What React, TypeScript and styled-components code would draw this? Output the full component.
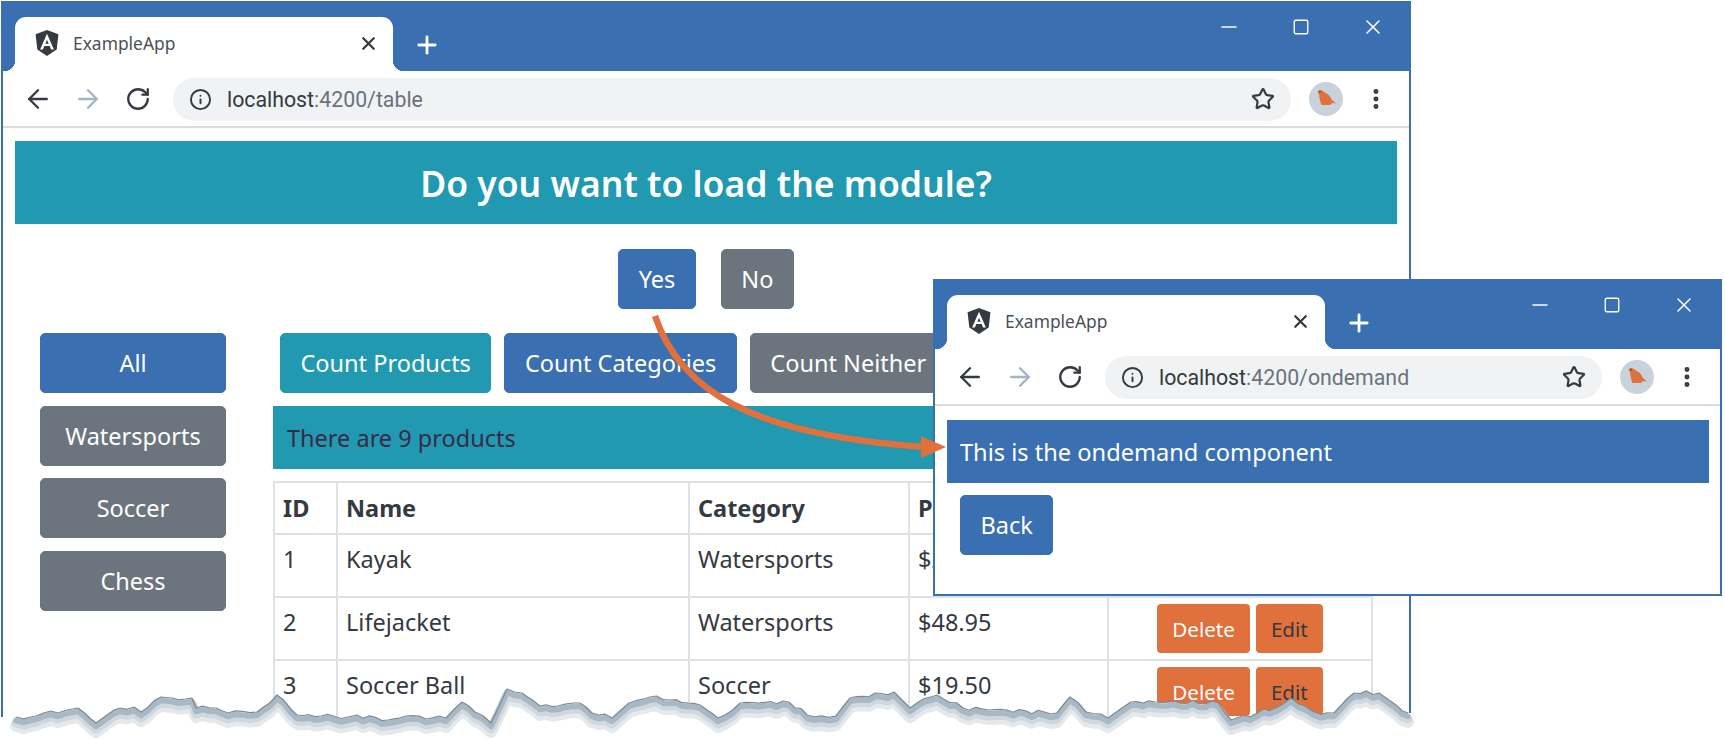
import React from "react";
import styled, { createGlobalStyle } from "styled-components";
import { ArrowLeft, ArrowRight, Info, Minus, MoreVertical, Plus, RotateCw, Square, Star, X } from "lucide-react";

const BLUE = "#3a6fb1";
const TEAL = "#2199b1";
const GREY = "#6c757d";
const ORANGE = "#e0703c";
const DARK = "#343a40";

const GlobalStyle = createGlobalStyle`
  html, body {
    margin: 0;
    padding: 0;
    background: #fff;
  }
  body {
    font-family: "Noto Sans", "Liberation Sans", sans-serif;
    color: ${DARK};
  }
`;

const AngularIcon = () => (
  <svg width="26" height="28" viewBox="0 0 24 26">
    <path d="M12 1 22.6 4.8 21 19 12 25 3 19 1.4 4.8Z" fill="#343a40" />
    <path fillRule="evenodd" fill="#fff" d="M12 4.5 5.6 19h2.6l1.3-3.2h5l1.3 3.2h2.6ZM10.5 13.6 12 10l1.5 3.6Z" />
  </svg>
);

const BirdAvatar = () => (
  <svg width="34" height="34" viewBox="0 0 34 34">
    <circle cx="17" cy="17" r="17" fill="#c8d2db" />
    <path d="M8.5 9.5C9.5 8 11.5 7.5 13 8.5 15.5 10.5 19 11.5 21 14.5L23 18 27 21.5 23 21 21 23H12.5C11 20 10.5 16 10 12.5Z" fill="#e0703c" />
    <circle cx="11" cy="9.8" r="0.8" fill="#343a40" />
  </svg>
);

// top edge of the torn paper, traced from the screenshot
const TEAR: [number, number][] = [
  [16, 717], [31, 717], [36, 716], [51, 711], [58, 713], [67, 710], [78, 708], [96, 723], [107, 715],
  [120, 708], [134, 707], [141, 712], [161, 697], [172, 698], [192, 698], [196, 708], [216, 708], [228, 713],
  [257, 712], [277, 695], [297, 715], [321, 716], [348, 717], [357, 715], [388, 720], [406, 716], [446, 718],
  [462, 702], [475, 712], [491, 723], [507, 689], [522, 693], [540, 706], [558, 706], [580, 703], [592, 713],
  [612, 718], [629, 703], [650, 697], [670, 700], [700, 705], [718, 718], [740, 703], [789, 702], [807, 715],
  [836, 716], [850, 698], [894, 692], [910, 708], [917, 703], [937, 695], [963, 708], [1057, 713], [1070, 697],
  [1086, 712], [1108, 718], [1131, 702], [1155, 702], [1218, 703], [1231, 720], [1276, 708], [1291, 698],
  [1314, 712], [1334, 713], [1354, 693], [1379, 693], [1396, 705], [1408, 713],
];

// break the long segments up a bit so the edge looks ripped, not polygonal
const roughen = (pts: [number, number][]) => {
  const out: string[] = [];
  pts.forEach(([x, y], i) => {
    out.push(`${x},${y}`);
    const next = pts[i + 1];
    if (!next) return;
    const steps = Math.floor((next[0] - x) / 6);
    for (let s = 1; s < steps; s++) {
      const t = s / steps;
      const px = x + (next[0] - x) * t;
      const py = y + (next[1] - y) * t + Math.sin(px * 1.7) * 1.3 + Math.sin(px * 0.61) * 0.9;
      out.push(`${px.toFixed(1)},${py.toFixed(1)}`);
    }
  });
  return out.join(" ");
};
const tearLine = roughen(TEAR);

const TornEdge = () => (
  <TearSvg viewBox="0 0 1725 740">
    <polygon points={`0,717 ${tearLine} 1412,713 1412,740 0,740`} fill="#fff" />
    <TearStroke points={tearLine} stroke="#e6e9ec" strokeWidth="12" transform="translate(0 9)" />
    <TearStroke points={tearLine} stroke="#cfd8de" strokeWidth="9" transform="translate(0 6)" />
    <TearStroke points={tearLine} stroke="#a8b8c5" strokeWidth="5.5" transform="translate(0 3.5)" />
    <TearStroke points={tearLine} stroke="#7c8a96" strokeWidth="1.2" />
  </TearSvg>
);

const CurveArrow = () => (
  <ArrowSvg viewBox="0 0 1725 740">
    <path d="M655 316C680 390 750 435 925 447" fill="none" stroke={ORANGE} strokeWidth="6.5" />
    <path d="M921 436 946 447 921 458Z" fill={ORANGE} />
  </ArrowSvg>
);

const BrowserChrome = ({ host, path }: { host: string; path: string }) => (
  <>
    <TitleBar>
      <Tab>
        <AngularIcon />
        <TabTitle>ExampleApp</TabTitle>
        <TabClose>
          <X size={21} strokeWidth={2.6} />
        </TabClose>
      </Tab>
      <NewTab>
        <Plus size={28} strokeWidth={2.4} />
      </NewTab>
      <WindowControls>
        <WindowControl><Minus size={24} strokeWidth={1.5} /></WindowControl>
        <WindowControl><Square size={18} strokeWidth={1.8} /></WindowControl>
        <WindowControl><X size={24} strokeWidth={1.5} /></WindowControl>
      </WindowControls>
    </TitleBar>
    <Toolbar>
      <NavButton><ArrowLeft size={30} strokeWidth={1.9} /></NavButton>
      <NavButton $faded><ArrowRight size={30} strokeWidth={1.9} /></NavButton>
      <NavButton><RotateCw size={26} strokeWidth={2.1} /></NavButton>
      <Omnibox>
        <Info size={23} strokeWidth={2} />
        <Url>
          <b>{host}</b>
          {path}
        </Url>
        <StarSlot><Star size={24} strokeWidth={2.2} /></StarSlot>
      </Omnibox>
      <AvatarSlot><BirdAvatar /></AvatarSlot>
      <MenuDots><MoreVertical size={26} strokeWidth={2.6} /></MenuDots>
    </Toolbar>
  </>
);

const products = [
  { id: 1, name: "Kayak", category: "Watersports", price: "$275.00" },
  { id: 2, name: "Lifejacket", category: "Watersports", price: "$48.95" },
  { id: 3, name: "Soccer Ball", category: "Soccer", price: "$19.50" },
];

export default function App() {
  return (
    <Desktop>
      <GlobalStyle />
      <MainWindow>
        <BrowserChrome host="localhost" path=":4200/table" />
        <Banner>Do you want to load the module?</Banner>
        <Prompt>
          <Button $bg={BLUE}>Yes</Button>
          <Button $bg={GREY}>No</Button>
        </Prompt>
        <Columns>
          <Sidebar>
            <SideButton $bg={BLUE}>All</SideButton>
            <SideButton $bg={GREY}>Watersports</SideButton>
            <SideButton $bg={GREY}>Soccer</SideButton>
            <SideButton $bg={GREY}>Chess</SideButton>
          </Sidebar>
          <Main>
            <CountRow>
              <Button $bg={TEAL}>Count Products</Button>
              <Button $bg={BLUE}>Count Categories</Button>
              <Button $bg={GREY}>Count Neither</Button>
            </CountRow>
            <Alert>There are 9 products</Alert>
            <ProductTable>
              <colgroup>
                <Col $w={63} />
                <Col $w={352} />
                <Col $w={220} />
                <Col $w={199} />
                <Col $w={264} />
              </colgroup>
              <thead>
                <tr>
                  <Th>ID</Th>
                  <Th>Name</Th>
                  <Th>Category</Th>
                  <Th>Price</Th>
                  <Th />
                </tr>
              </thead>
              <tbody>
                {products.map((p) => (
                  <tr key={p.id}>
                    <Td>{p.id}</Td>
                    <Td>{p.name}</Td>
                    <Td>{p.category}</Td>
                    <Td>{p.price}</Td>
                    <ActionCell>
                      <SmallButton>Delete</SmallButton>
                      <SmallButton $dark>Edit</SmallButton>
                    </ActionCell>
                  </tr>
                ))}
              </tbody>
            </ProductTable>
          </Main>
        </Columns>
      </MainWindow>
      <TornEdge />
      <PopupWindow>
        <BrowserChrome host="localhost" path=":4200/ondemand" />
        <PopupBanner>This is the ondemand component</PopupBanner>
        <BackRow>
          <Button $bg={BLUE}>Back</Button>
        </BackRow>
      </PopupWindow>
      <CurveArrow />
    </Desktop>
  );
}

/* --- Styled Components --- */
const Desktop = styled.div`
  position: relative;
  width: 1725px;
  height: 740px;
  overflow: hidden;
  padding: 1px 0 0 1px;
  box-sizing: border-box;
`;

const MainWindow = styled.div`
  width: 1410px;
  height: 735px;
  box-sizing: border-box;
  border: 2px solid ${BLUE};
  overflow: hidden;
  background: #fff;
`;

const PopupWindow = styled.div`
  position: absolute;
  left: 933px;
  top: 279px;
  width: 789px;
  height: 317px;
  box-sizing: border-box;
  border: 2px solid ${BLUE};
  overflow: hidden;
  background: #fff;
`;

const TearSvg = styled.svg`
  position: absolute;
  left: 0;
  top: 0;
  width: 1725px;
  height: 740px;
`;

const TearStroke = styled.polyline`
  fill: none;
  stroke-linejoin: round;
  stroke-linecap: round;
`;

const ArrowSvg = styled(TearSvg)`
  pointer-events: none;
`;

const TitleBar = styled.div`
  display: flex;
  align-items: flex-end;
  height: 68px;
  padding-left: 12px;
  background: ${BLUE};
`;

const Tab = styled.div`
  position: relative;
  display: flex;
  align-items: center;
  box-sizing: border-box;
  width: 378px;
  height: 54px;
  padding: 0 14px 2px 19px;
  background: #fff;
  border-radius: 11px 11px 0 0;

  &::before,
  &::after {
    content: "";
    position: absolute;
    bottom: 0;
    width: 11px;
    height: 11px;
  }
  &::before {
    left: -11px;
    background: radial-gradient(circle at 0 0, transparent 11px, #fff 11.5px);
  }
  &::after {
    right: -11px;
    background: radial-gradient(circle at 100% 0, transparent 11px, #fff 11.5px);
  }
`;

const TabTitle = styled.span`
  margin-left: 13px;
  font-family: "Noto Sans", sans-serif;
  font-size: 17.4px;
  color: #4a5158;
`;

const TabClose = styled.span`
  display: flex;
  margin-left: auto;
  color: ${DARK};
`;

const NewTab = styled.span`
  display: flex;
  align-self: flex-end;
  margin: 0 0 12px 20px;
  color: #fff;
`;

const WindowControls = styled.div`
  display: flex;
  align-self: flex-start;
  margin: 12px 0 0 auto;
`;

const WindowControl = styled.span`
  display: flex;
  justify-content: center;
  align-items: center;
  width: 72px;
  height: 24px;
  color: #fff;
`;

const Toolbar = styled.div`
  display: flex;
  align-items: center;
  box-sizing: border-box;
  height: 57px;
  padding: 1px 20px 0 10px;
  background: #fff;
  border-bottom: 2px solid #dadce0;
`;

const NavButton = styled.span<{ $faded?: boolean }>`
  display: flex;
  justify-content: center;
  width: 50px;
  color: ${(p) => (p.$faded ? "#a3b4c2" : DARK)};
`;

const Omnibox = styled.div`
  display: flex;
  align-items: center;
  flex: 1;
  height: 43px;
  margin-left: 10px;
  padding: 0 16px 0 16px;
  border-radius: 22px;
  background: #f0f2f3;
  color: ${DARK};
`;

const Url = styled.span`
  margin-left: 15px;
  font-family: "Roboto", sans-serif;
  font-size: 21.3px;
  color: #6a737b;

  b {
    font-weight: 400;
    color: ${DARK};
  }
`;

const StarSlot = styled.span`
  display: flex;
  margin-left: auto;
`;

const AvatarSlot = styled.span`
  display: flex;
  margin-left: 18px;
`;

const MenuDots = styled.span`
  display: flex;
  margin-left: 20px;
  color: ${DARK};
`;

const Banner = styled.div`
  display: flex;
  justify-content: center;
  align-items: center;
  height: 83px;
  margin: 13px 12px 0;
  background: ${TEAL};
  color: #fff;
  font-size: 35.5px;
  font-weight: 600;
`;

const Prompt = styled.div`
  display: flex;
  justify-content: center;
  gap: 25px;
  margin-top: 25px;
`;

const Button = styled.button<{ $bg: string }>`
  height: 60px;
  padding: 0 19.5px;
  border: 1px solid ${(p) => p.$bg};
  border-radius: 5px;
  background: ${(p) => p.$bg};
  color: #fff;
  font-family: inherit;
  font-size: 23.5px;
  white-space: nowrap;
`;

const Columns = styled.div`
  display: flex;
  gap: 47px;
  margin-top: 24px;
  padding-left: 37px;
`;

const Sidebar = styled.div`
  display: flex;
  flex-direction: column;
  gap: 12.5px;
  width: 186px;
`;

const SideButton = styled(Button)`
  width: 100%;
  padding: 0;
`;

const Main = styled.div`
  width: 1098px;
`;

const CountRow = styled.div`
  display: flex;
  gap: 13px;
  margin-left: 7px;
`;

const Alert = styled.div`
  display: flex;
  align-items: center;
  height: 63px;
  margin-top: 13px;
  padding-left: 14px;
  background: ${TEAL};
  color: #3a2a48;
  font-size: 23.5px;
`;

const ProductTable = styled.table`
  width: 1098px;
  margin-top: 12px;
  table-layout: fixed;
  border-collapse: collapse;
  font-size: 23.5px;
  line-height: 36px;
`;

const Col = styled.col<{ $w: number }>`
  width: ${(p) => p.$w}px;
`;

const Th = styled.th`
  height: 50px;
  padding: 0 8px;
  border: 2px solid #dee2e6;
  text-align: left;
  font-weight: 700;
`;

const Td = styled.td`
  padding: 6px 8px;
  border: 2px solid #dee2e6;
  vertical-align: top;
`;

const ActionCell = styled(Td)`
  text-align: center;
  font-size: 0;
`;

const SmallButton = styled.button<{ $dark?: boolean }>`
  height: 49px;
  margin: 0 3px;
  padding: 0 15px;
  border: none;
  border-radius: 4px;
  background: ${ORANGE};
  color: ${(p) => (p.$dark ? DARK : "#fff")};
  font-family: inherit;
  font-size: 20.6px;
  vertical-align: top;
`;

const PopupBanner = styled.div`
  display: flex;
  align-items: center;
  height: 63px;
  margin: 14px 11px 0 12px;
  padding-left: 13px;
  background: ${BLUE};
  color: #fff;
  font-size: 23.6px;
`;

const BackRow = styled.div`
  display: flex;
  margin: 12px 0 0 25px;
`;
